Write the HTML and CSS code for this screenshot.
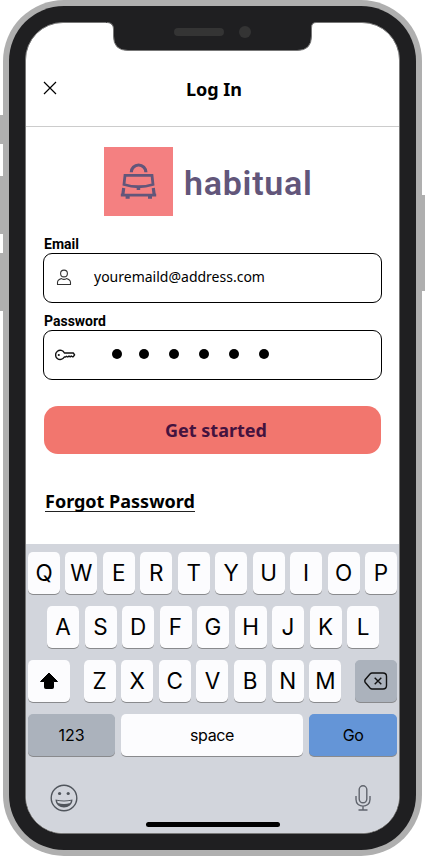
FILE: index.html
```html
<!DOCTYPE html>
<html lang="en">
<head>
<meta charset="utf-8">
<title>Log In</title>
<link rel="stylesheet" href="styles.css">
</head>
<body>
<div class="device">
  <span class="side mute"></span>
  <span class="side vol-up"></span>
  <span class="side vol-down"></span>
  <span class="side power"></span>
  <div class="bezel">
    <svg class="notch" viewBox="0 0 210 46" width="210" height="46">
      <path d="M0 17.500Q7.500 17.500 7.500 25V31Q7.500 45.500 22 45.500H191Q205.500 45.500 205.500 31V22Q205.500 17.500 210 17.500V10H0Z" fill="#1f1f21"/>
      <path d="M1 17.500Q7.500 17.500 7.500 24V31Q7.500 45.500 22 45.500H191Q205.500 45.500 205.500 31V23Q205.500 17.500 210 17.500" fill="none" stroke="#777"/>
      <rect x="68" y="23" width="50" height="8" rx="4" fill="#343434"/>
      <circle cx="139" cy="27" r="6" fill="#343434"/>
    </svg>
    <main class="screen">
      <header class="topbar">
        <svg class="close" width="14" height="14" viewBox="0 0 14 14"><path d="M1 1L13 13M13 1L1 13" stroke="#000" stroke-width="1.2"/></svg>
        <h1>Log In</h1>
      </header>
      <section class="form">
        <div class="brand">
          <svg width="69" height="69" viewBox="0 0 69 69">
            <rect width="69" height="69" fill="#f48081"/>
            <g fill="none" stroke="#62567a" stroke-width="2.800">
              <path d="M27.300 25.300A7.200 7.200 0 0 1 41.900 25.300" stroke-width="3.200"/>
              <path d="M21 28.400H48L49 37.500Q34.500 42 20 37.500Z"/>
              <path d="M22.500 41.800Q20.500 41.500 18.900 40.500L18.300 48H50.700L50.100 40.500Q48.500 41.500 46.500 41.800" stroke="none"/>
              <path d="M19.700 41L18.800 48M49.300 41L50.200 48" stroke-width="3.200"/>
              <path d="M16.800 48.100H52.200M32.700 41.700H36.200M21.600 50.400H25.700M44 50.400H48"/>
            </g>
          </svg>
          <span>habitual</span>
        </div>
        <label>Email</label>
        <div class="field">
          <svg class="user" width="16" height="17" viewBox="0 0 16 17"><g fill="none" stroke="#333" stroke-width="1.100"><circle cx="8" cy="4.500" r="3.400"/><path d="M1.500 15.500V13.500C1.500 11.700 3 10.400 5.500 9.600C7 10.500 9 10.500 10.500 9.600C13 10.400 14.500 11.700 14.500 13.500V15.500Z" stroke-linejoin="round"/></g></svg>
          <span class="email">youremaild@address.com</span>
        </div>
        <label>Password</label>
        <div class="field">
          <svg class="key-icon" width="22" height="12" viewBox="0 0 22 12"><path d="M9.400 4H18.300L19.600 5.800L18.300 7.700H17.300L16.300 7L15.200 7.900L14 7L12.800 8L11.500 7.300L10.500 8H9.300A4.600 4.600 0 1 1 9.400 4Z" fill="none" stroke="#111" stroke-width="1.400" stroke-linejoin="round"/><circle cx="3.800" cy="6" r="1.100" fill="#111"/></svg>
          <span class="dots"><i></i><i></i><i></i><i></i><i></i><i></i></span>
        </div>
        <button class="cta">Get started</button>
        <a class="forgot">Forgot Password</a>
      </section>
      <section class="keyboard">
        <div class="row"><b>Q</b><b>W</b><b>E</b><b>R</b><b>T</b><b>Y</b><b>U</b><b>I</b><b>O</b><b>P</b></div>
        <div class="row second"><b>A</b><b>S</b><b>D</b><b>F</b><b>G</b><b>H</b><b>J</b><b>K</b><b>L</b></div>
        <div class="row">
          <b class="wide"><svg width="20" height="18" viewBox="0 0 20 18"><path d="M10 1L18.500 9.500H14.500V15.500Q14.500 16.500 13.500 16.500H6.500Q5.500 16.500 5.500 15.500V9.500H1.500Z" stroke="#000" stroke-linejoin="round"/></svg></b>
          <div class="letters"><b>Z</b><b>X</b><b>C</b><b>V</b><b>B</b><b>N</b><b>M</b></div>
          <b class="wide gray"><svg width="24" height="18" viewBox="0 0 24 18"><path d="M8 1H19Q22.500 1 22.500 4.500V13.500Q22.500 17 19 17H8Q7 17 6 16L1.300 10.500Q.3 9 1.300 7.500L6 2Q7 1 8 1ZM10.700 5.700L17.300 12.300M17.300 5.700L10.700 12.300" fill="none" stroke="#111" stroke-width="1.400"/></svg></b>
        </div>
        <div class="row last"><b class="gray num">123</b><b class="space">space</b><b class="go">Go</b></div>
        <div class="tools">
          <svg width="28" height="28" viewBox="0 0 28 28"><circle cx="14" cy="14" r="12.800" fill="none" stroke="#50555c" stroke-width="1.400"/><circle cx="9.600" cy="9.500" r="1.600" fill="#50555c"/><circle cx="18.200" cy="9.500" r="1.600" fill="#50555c"/><path d="M5.500 15.500Q14 17.500 22.500 15.500C22.500 26 5.500 26 5.500 15.500Z" fill="#50555c"/><path d="M7 16.700Q14 18.300 21 16.700L20.200 18.900Q14 21 7.800 18.900Z" fill="#d2d5dc"/></svg>
          <svg width="16" height="26" viewBox="0 0 16 26"><g fill="none" stroke="#60646d" stroke-width="1.400"><rect x="4.200" y=".8" width="7.600" height="17" rx="3.800"/><path d="M1 11V14.500C1 23.300 15 23.300 15 14.500V11M8 21V25M3.500 25H12.500"/></g></svg>
        </div>
        <div class="home"></div>
      </section>
    </main>
  </div>
</div>
</body>
</html>
```
FILE: styles.css
```css
* { box-sizing: border-box; }
body { margin: 0; background: #fff; overflow: hidden; }
.device {
  position: relative;
  width: 419px;
  height: 856px;
  margin-left: 3px;
  padding: 6px;
  border-radius: 61px;
  background: #afafaf;
}
.side { position: absolute; width: 3px; left: -3px; background: #afafaf; }
.mute { top: 115px; height: 29px; }
.vol-up { top: 176px; height: 58px; }
.vol-down { top: 253px; height: 58px; }
.power { left: 419px; top: 195px; height: 96px; }
.bezel {
  position: relative;
  height: 844px;
  padding: 16px;
  border-radius: 55px;
  background: #1f1f21;
}
.notch { position: absolute; left: 97px; top: -1px; }
.screen {
  display: flex;
  flex-direction: column;
  height: 812px;
  border: 1px solid #777;
  border-radius: 38px;
  background: #fff;
  overflow: hidden;
}
.topbar {
  display: flex;
  align-items: center;
  height: 104px;
  padding: 28px 17px 0;
  border-bottom: 1px solid #ccc;
}
.close { margin-top: -1px; }
h1 {
  flex: 1;
  margin: 0 11px 0 0;
  text-align: center;
  font: 700 18px/24px "Noto Sans", sans-serif;
}
.form {
  display: flex;
  flex-direction: column;
  height: 417px;
  padding: 20px 17px 0;
}
.brand {
  display: flex;
  align-items: center;
  gap: 11px;
  height: 69px;
  margin: 0 0 20px 61px;
  color: #62567a;
  font: 600 34px/40px Roboto, sans-serif;
  letter-spacing: 0.75px;
}
.brand svg { margin-top: -1px; }
.brand span { padding-top: 2px; }
label { height: 17px; padding-left: 1px; font: 700 14px/17px Roboto, sans-serif; }
.field {
  display: flex;
  align-items: center;
  height: 50px;
  margin-bottom: 10px;
  padding-left: 11px;
  border: 1px solid #000;
  border-radius: 9px;
}
.user { margin: -2px 0 0 1px; }
.email { margin: -2px 0 0 22px; font: 14px/20px "Noto Sans", sans-serif; }
.dots { display: flex; gap: 20px; margin: -2px 0 0 35px; }
.dots i { width: 10px; height: 10px; border-radius: 50%; background: #000; }
.dots i:first-child { margin-right: -3px; }
.cta {
  flex: none;
  height: 48px;
  margin: 16px 1px 0;
  padding: 0 0 0 7px;
  border: 0;
  border-radius: 14px;
  background: #f2766e;
  color: #44133f;
  font: 700 18px/24px "Noto Sans", sans-serif;
}
.forgot {
  align-self: flex-start;
  height: 24px;
  margin: 34px 0 0 2px;
  border-bottom: 1px solid #222;
  font: 700 18px/27px "Noto Sans", sans-serif;
}
.keyboard { flex: 1; padding: 8px 2px 0; background: #d2d5dc; }
.row { display: flex; justify-content: space-between; height: 42px; margin-bottom: 12px; }
.second { padding: 0 18px 0 19px; }
.letters { display: flex; justify-content: space-between; width: 258px; }
.row b {
  display: flex;
  align-items: center;
  justify-content: center;
  width: 32px;
  height: 42px;
  border-radius: 5px;
  background: #fcfcfe;
  box-shadow: 0 1px 0 #898a8d;
  font: 400 22.5px/28px Inter, sans-serif;
}
.row .wide { width: 42px; }
.row .gray { background: #abb2bc; }
.last b { font-size: 16px; letter-spacing: -0.4px; }
.last .num { width: 87px; letter-spacing: 0; }
.last .space { width: 182px; }
.last .go { width: 88px; background: #6495d7; }
.tools { display: flex; justify-content: space-between; align-items: center; padding: 15px 26px 0 22px; }
.tools svg { position: relative; top: 0.5px; }
.home { width: 134px; height: 5px; margin: 11px auto 0; border-radius: 3px; background: #000; }
```
